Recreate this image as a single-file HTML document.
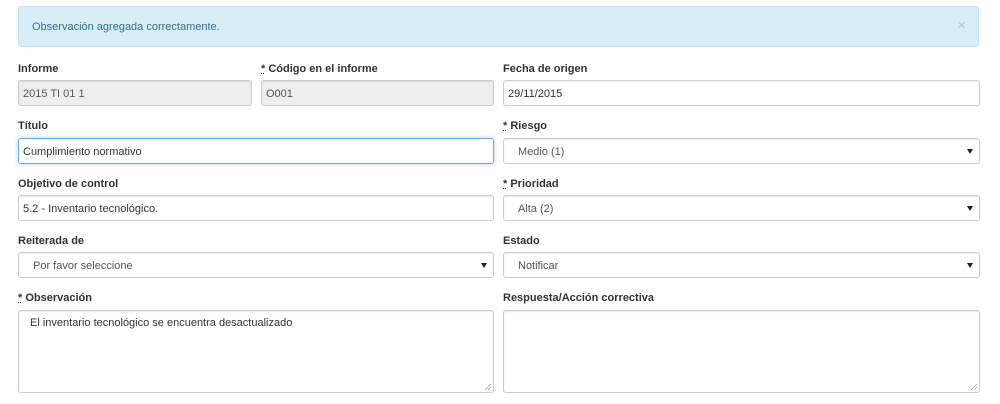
<!DOCTYPE html>
<html><head><style>
body{margin:0;width:1000px;height:404px;background:#fff;font-family:"Liberation Sans",sans-serif;font-size:11px;color:#333;position:relative;overflow:hidden}
.a{position:absolute;left:18px;top:6px;width:959px;height:39px;background:#d9edf7;border:1px solid #bce8f1;border-radius:3px;color:#31708f}
.a span{position:absolute;left:13px;top:14px}
.a b{position:absolute;right:12px;top:10px;font-weight:normal;color:#a9c6d3;font-size:15px}
.l{position:absolute;font-weight:bold;font-size:11px}
.l u{text-decoration:underline dotted}
.i{position:absolute;box-sizing:border-box;height:26px;border:1px solid #ccc;border-radius:3px;background:#fff;padding:7px 0 0 4px;box-shadow:inset 0 1px 1px rgba(0,0,0,.075)}
.g{background:#eee;color:#555}
.f{border-color:#66afe9;box-shadow:0 0 4px rgba(102,175,233,.6)}
.s{padding-left:14px;color:#555}
.s:after{content:"";position:absolute;right:6px;top:10px;border-left:3px solid transparent;border-right:3px solid transparent;border-top:5px solid #222}
.t{height:83px;padding:6px 0 0 11px}
.t:after{content:"";position:absolute;right:2px;bottom:2px;width:6px;height:6px;background:linear-gradient(135deg,transparent 45%,#999 46%,#999 52%,transparent 53%,transparent 70%,#999 71%,#999 77%,transparent 78%)}
</style></head><body>
<div class="a"><span>Observación agregada correctamente.</span><b>×</b></div>
<div class="l" style="left:18px;top:63px">Informe</div>
<div class="l" style="left:261px;top:63px"><u>*</u> Código en el informe</div>
<div class="l" style="left:503px;top:63px">Fecha de origen</div>
<div class="i g" style="left:18px;top:80px;width:234px">2015 TI 01 1</div>
<div class="i g" style="left:261px;top:80px;width:233px">O001</div>
<div class="i" style="left:503px;top:80px;width:477px">29/11/2015</div>
<div class="l" style="left:18px;top:120px">Título</div>
<div class="l" style="left:503px;top:120px"><u>*</u> Riesgo</div>
<div class="i f" style="left:18px;top:138px;width:476px">Cumplimiento normativo</div>
<div class="i s" style="left:503px;top:138px;width:477px">Medio (1)</div>
<div class="l" style="left:18px;top:178px">Objetivo de control</div>
<div class="l" style="left:503px;top:178px"><u>*</u> Prioridad</div>
<div class="i" style="left:18px;top:195px;width:476px">5.2 - Inventario tecnológico.</div>
<div class="i s" style="left:503px;top:195px;width:477px">Alta (2)</div>
<div class="l" style="left:18px;top:235px">Reiterada de</div>
<div class="l" style="left:503px;top:235px">Estado</div>
<div class="i s" style="left:18px;top:252px;width:476px">Por favor seleccione</div>
<div class="i s" style="left:503px;top:252px;width:477px">Notificar</div>
<div class="l" style="left:18px;top:292px"><u>*</u> Observación</div>
<div class="l" style="left:503px;top:292px">Respuesta/Acción correctiva</div>
<div class="i t" style="left:18px;top:310px;width:476px">El inventario tecnológico se encuentra desactualizado</div>
<div class="i t" style="left:503px;top:310px;width:477px"></div>
</body></html>
